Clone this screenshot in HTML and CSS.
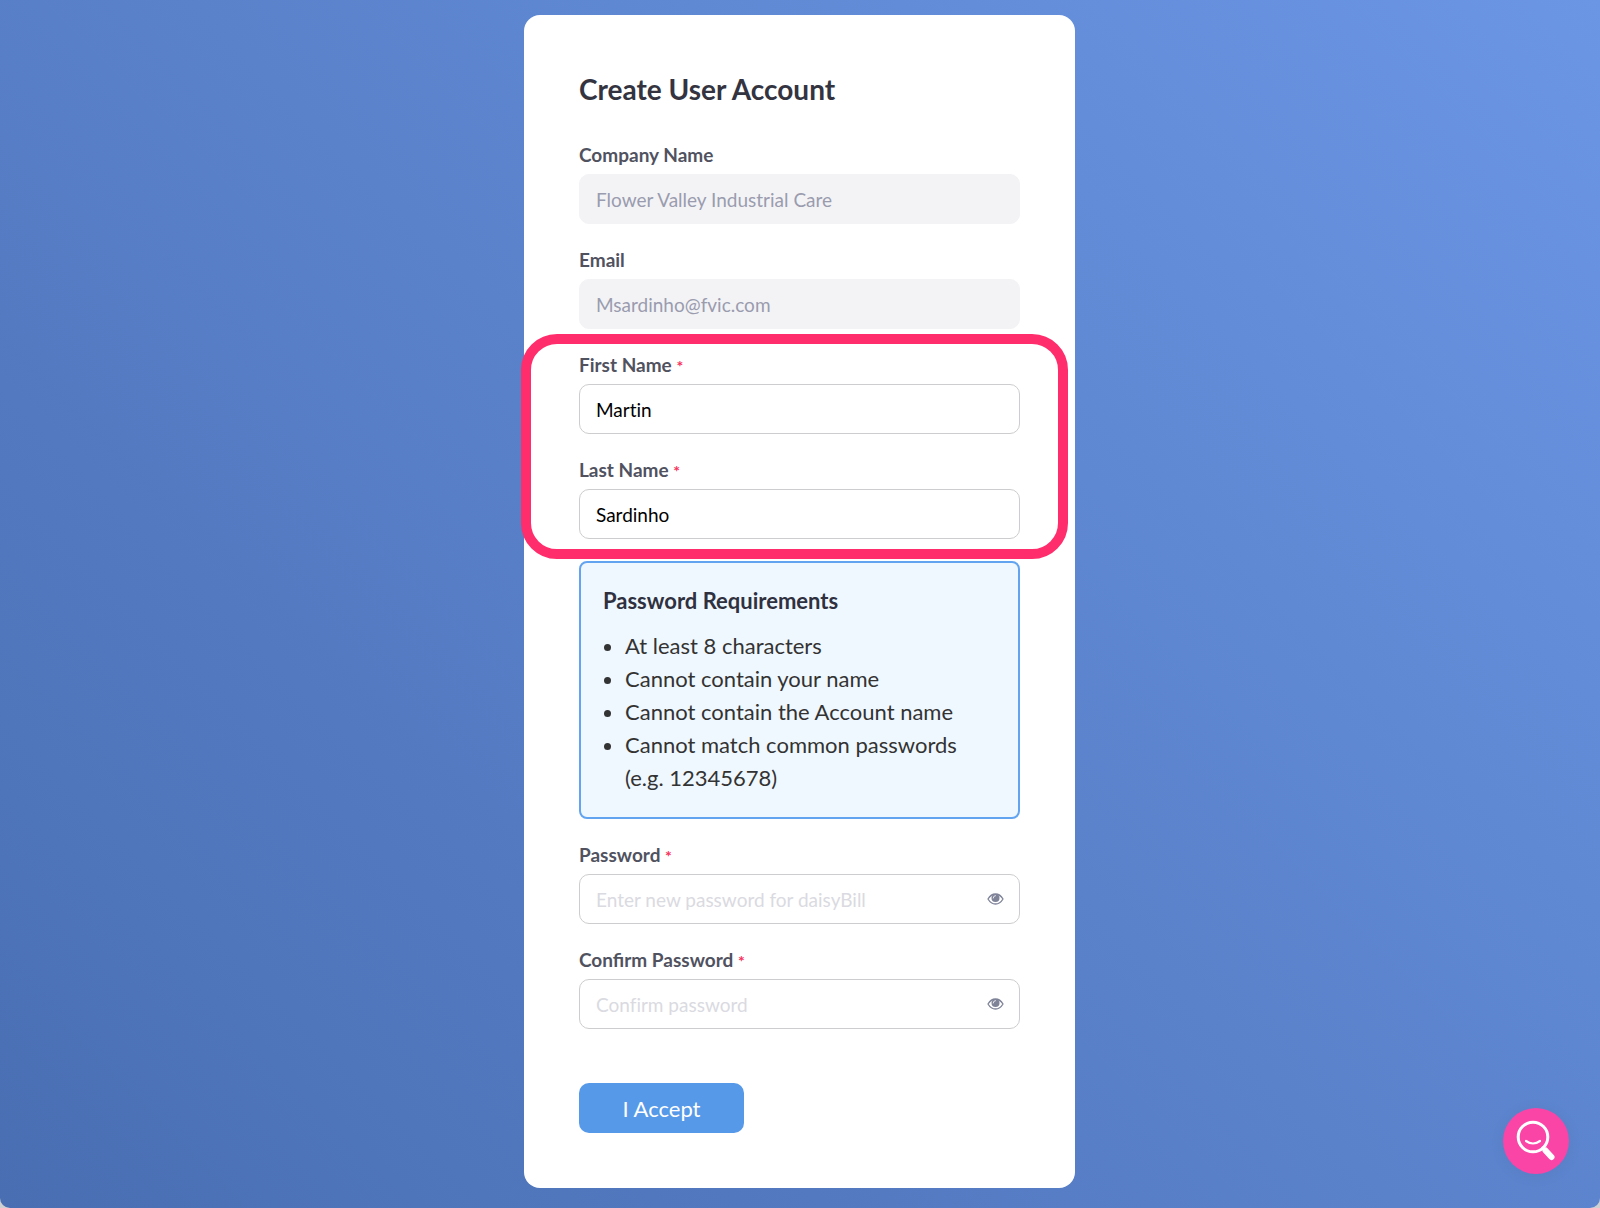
FILE: index.html
```html
<!DOCTYPE html>
<html lang="en">
<head>
    <meta charset="UTF-8">
    <meta name="viewport" content="width=device-width, initial-scale=1.0">
    <title>Create User Account</title>
    <link rel="stylesheet" href="styles.css">
</head>
<body>
    <main class="page">
        <form class="card">
            <h1>Create User Account</h1>
            <div class="field">
                <label for="company">Company Name</label>
                <input type="text" id="company" value="Flower Valley Industrial Care" disabled>
            </div>
            <div class="field">
                <label for="email">Email</label>
                <input type="email" id="email" value="Msardinho@fvic.com" disabled>
            </div>
            <div class="names">
                <div class="field">
                    <label for="firstName">First Name <span class="required">*</span></label>
                    <input type="text" id="firstName" value="Martin">
                </div>
                <div class="field">
                    <label for="lastName">Last Name <span class="required">*</span></label>
                    <input type="text" id="lastName" value="Sardinho">
                </div>
            </div>
            <section class="requirements">
                <h2>Password Requirements</h2>
                <ul>
                    <li>At least 8 characters</li>
                    <li>Cannot contain your name</li>
                    <li>Cannot contain the Account name</li>
                    <li>Cannot match common passwords (e.g. 12345678)</li>
                </ul>
            </section>
            <div class="field">
                <label for="password">Password <span class="required">*</span></label>
                <div class="password">
                    <input type="password" id="password" placeholder="Enter new password for daisyBill">
                    <button type="button" class="toggle" aria-label="Show password">
                        <svg width="17" height="12" viewBox="0 0 17 12">
                            <path d="M1 6C3 2.6 5.6 1 8.5 1S14 2.6 16 6C14 9.4 11.4 11 8.5 11S3 9.4 1 6Z" fill="none" stroke="currentColor" stroke-width="1.3"/>
                            <circle cx="8.5" cy="5" r="4" fill="currentColor"/>
                            <path d="M6.2 5A2.4 2.4 0 0 1 8.5 2.6" fill="none" stroke="#fff" stroke-width=".8" stroke-linecap="round"/>
                        </svg>
                    </button>
                </div>
            </div>
            <div class="field">
                <label for="confirm">Confirm Password <span class="required">*</span></label>
                <div class="password">
                    <input type="password" id="confirm" placeholder="Confirm password">
                    <button type="button" class="toggle" aria-label="Show password">
                        <svg width="17" height="12" viewBox="0 0 17 12">
                            <path d="M1 6C3 2.6 5.6 1 8.5 1S14 2.6 16 6C14 9.4 11.4 11 8.5 11S3 9.4 1 6Z" fill="none" stroke="currentColor" stroke-width="1.3"/>
                            <circle cx="8.5" cy="5" r="4" fill="currentColor"/>
                            <path d="M6.2 5A2.4 2.4 0 0 1 8.5 2.6" fill="none" stroke="#fff" stroke-width=".8" stroke-linecap="round"/>
                        </svg>
                    </button>
                </div>
            </div>
            <button type="submit" class="accept">I Accept</button>
        </form>
        <button type="button" class="help" aria-label="Help">
            <svg width="66" height="66" viewBox="0 0 66 66" fill="none" stroke="#fff" stroke-linecap="round">
                <circle cx="30" cy="29" r="14.8" stroke-width="3"/>
                <path d="M23 33Q30 38 37 33" stroke-width="2.2"/>
                <path d="M40 40L43 43" stroke-width="3.5"/>
                <path d="M42.5 42.5L48.5 49" stroke-width="6"/>
            </svg>
        </button>
    </main>
</body>
</html>
```
FILE: styles.css
```css
* { box-sizing: border-box; }
html { background: #cfd0d2; }
body { margin: 0; font-family: Lato, "Liberation Sans", sans-serif; color: #33343c; }
h1, h2, ul { margin: 0; }
input, button { font-family: inherit; font-variant-ligatures: none; }

.page {
    min-height: 100vh;
    padding: 15px 21px 20px 20px;
    border-radius: 0 0 10px 10px;
    background: linear-gradient(45deg, #496eb2, #6b96e4);
}
.card {
    max-width: 551px;
    margin: 0 auto;
    padding: 55px;
    background: #fff;
    border-radius: 16px;
}
h1 { margin-bottom: 35px; font-size: 28px; line-height: 38px; font-weight: bold; color: #33343f; }

.field + .field { margin-top: 24px; }
label { display: block; margin-bottom: 7px; font-size: 19px; line-height: 24px; font-weight: bold; color: #50525f; }
.required { color: #f8315a; font-size: 16px; line-height: 1; }
input {
    display: block;
    width: 100%;
    height: 50px;
    padding: 0 16px;
    border: 1px solid #cdcdcf;
    border-radius: 10px;
    background: #fff;
    color: #000;
    font-size: 19px;
}
input:disabled { background: #f3f3f6; border-color: #f3f3f6; color: #9a9cae; }
input::placeholder { color: #dadae1; opacity: 1; }

/* callout around the two name fields */
.names { position: relative; margin-top: 24px; }
.names::after {
    content: "";
    position: absolute;
    top: -19px;
    right: -48px;
    bottom: -20px;
    left: -58px;
    border: 10px solid #ff2d6c;
    border-radius: 36px;
    pointer-events: none;
}

.requirements {
    margin: 22px 0 24px;
    padding: 22px 22px 23px;
    border: 2px solid #62a4f0;
    border-radius: 8px;
    background: #f0f8ff;
}
h2 { margin-bottom: 12px; font-size: 22px; line-height: 32px; font-weight: bold; color: #2f3140; }
ul { padding-left: 22px; font-size: 22px; line-height: 33px; color: #333; }

.password { position: relative; }
.password input { padding-right: 48px; }
.toggle {
    position: absolute;
    top: 0;
    right: 16px;
    display: flex;
    align-items: center;
    height: 50px;
    padding: 0;
    border: 0;
    background: none;
    color: #7f8398;
}

.accept {
    display: block;
    width: 165px;
    height: 50px;
    margin-top: 54px;
    border: 0;
    border-radius: 10px;
    background: #5599e8;
    color: #fff;
    font-size: 22px;
}

.help {
    position: fixed;
    right: 31px;
    bottom: 34px;
    width: 66px;
    height: 66px;
    padding: 0;
    border: 0;
    border-radius: 50%;
    background: #fa44a6;
    box-shadow: 0 2px 16px rgba(0, 0, 0, .06);
}
```
